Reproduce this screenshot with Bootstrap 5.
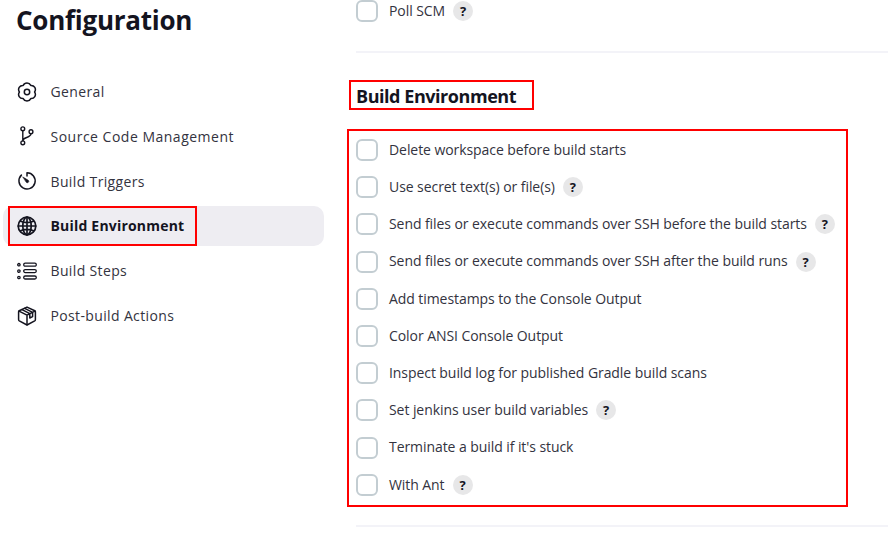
<!DOCTYPE html>
<html lang="en">
<head>
<meta charset="utf-8">
<meta name="viewport" content="width=device-width, initial-scale=1">
<title>Configuration</title>
<link href="https://cdn.jsdelivr.net/npm/bootstrap@5.3.0/dist/css/bootstrap.min.css" rel="stylesheet">
<style>
body{font-family:"Open Sans","Noto Sans",sans-serif;color:#14141f;background:#fff;height:550px;overflow:hidden}
.side{width:324px;padding:2px 0 0 3px}
.page-title{font-size:26px;line-height:36px;font-weight:700;letter-spacing:-.26px;margin:0 0 33.6px 13px}
.task-list{gap:4.8px}
.task{height:40px;padding:0 0 0 14px;gap:13.5px;border-radius:10px;color:#333340;font-size:14px;letter-spacing:.36px;text-decoration:none;white-space:nowrap}
.task svg{width:20px;height:20px;fill:none;stroke:#14141f;stroke-linecap:round;stroke-linejoin:round;flex:none}
.task.wide-text{letter-spacing:.5px}
.task.current{background:#eeedf2;color:#14141f;font-weight:700;letter-spacing:.2px}
.mark-current{left:5px;top:0;width:189px;height:40px;border:2px solid #f00}
.main{margin-left:23px;min-width:0}
.opt{height:22px;gap:11px;font-size:14px;letter-spacing:-.07px;color:#333340;white-space:nowrap}
.opt label{padding-bottom:1.4px}
.opt.first{margin-left:9px;margin-bottom:29px}
.opt .form-check-input{width:22px;height:22px;margin:0;border:2px solid #c3cdd2;border-radius:6px;flex:none}
.help{width:20px;height:20px;border-radius:50%;background:#e7e7e8;color:#14141f;font-weight:700;font-size:13px;line-height:20px;text-align:center;margin-left:-3px;letter-spacing:0}
.rule{height:2px;background:#f3f3f8;margin-left:9px}
.heading-frame{width:185px;height:30px;border:2px solid #f00;margin:27px 0 19px 2px;padding-left:5px;font-size:18px;font-weight:700;letter-spacing:-.45px;line-height:28px;white-space:nowrap}
.options-frame{width:501px;height:378px;border:2px solid #f00;padding:8px 0 0 7px;gap:15.2px;margin-bottom:18px}
</style>
</head>
<body>
<div class="d-flex">
<aside class="side flex-shrink-0">
<h1 class="page-title">Configuration</h1>
<nav class="task-list d-flex flex-column">
<a class="task d-flex align-items-center" href="#"><svg viewBox="0 0 20 20"><g stroke-width="1.5"><path d="M6.2 3.4A4.2 4.2 0 0 1 13.8 3.4A4.2 4.2 0 0 1 17.6 10A4.2 4.2 0 0 1 13.8 16.6A4.2 4.2 0 0 1 6.2 16.6A4.2 4.2 0 0 1 2.4 10A4.2 4.2 0 0 1 6.2 3.4Z"/><circle cx="10" cy="10" r="2.7"/></g></svg>General</a>
<a class="task wide-text d-flex align-items-center" href="#"><svg viewBox="0 0 20 20"><g stroke-width="1.4"><circle cx="5.8" cy="2.8" r="1.9"/><circle cx="5.8" cy="16.8" r="1.9"/><circle cx="14" cy="5.7" r="1.9"/><path d="M5.8 4.7V14.9M14 7.6C14 12.3 5.8 10.7 5.8 14.9"/></g></svg>Source Code Management</a>
<a class="task d-flex align-items-center" href="#"><svg viewBox="0 0 20 20"><path stroke-width="1.5" d="M4.4 4.1A8.1 8.1 0 1 0 10 1.8V5"/><path d="M6 6.1L11.3 9.3A1.4 1.4 0 0 1 9.3 11.3Z" fill="#14141f" stroke-width=".6"/></svg>Build Triggers</a>
<a class="task current d-flex align-items-center position-relative" href="#"><svg viewBox="0 0 20 20"><g stroke-width="1.7"><circle cx="10" cy="10" r="8.8"/><ellipse cx="10" cy="10" rx="4.2" ry="8.8"/><path d="M10 1.3V18.7M1.3 10H18.7M3.6 5.2Q10 8 16.4 5.2M3.6 14.8Q10 12 16.4 14.8"/></g></svg>Build Environment<span class="mark-current position-absolute"></span></a>
<a class="task d-flex align-items-center" href="#"><svg viewBox="0 0 20 20"><g stroke-width="1.3"><rect x="6.7" y="2.2" width="12.6" height="3" rx="1.5"/><rect x="6.7" y="8.6" width="12.6" height="3" rx="1.5"/><rect x="6.7" y="15" width="12.6" height="3" rx="1.5"/><circle cx="1.9" cy="3.7" r="1.2"/><circle cx="1.9" cy="10.1" r="1.2"/><circle cx="1.9" cy="16.5" r="1.2"/></g></svg>Build Steps</a>
<a class="task d-flex align-items-center" href="#"><svg viewBox="0 0 20 20"><g stroke-width="1.5"><path d="M10 1.1L17.8 4.7Q18.4 5 18.4 5.8V13.6Q18.4 14.5 17.7 14.9L10 19L2.3 14.9Q1.6 14.5 1.6 13.6V5.8Q1.6 5 2.2 4.7Z"/><path d="M2 5.2L10 9.2L18 5.2M10 9.2V18.8M5 3.6L12.8 7.6V12L15.6 10.6V6.3L7.7 2.3"/></g></svg>Post-build Actions</a>
</nav>
</aside>
<main class="main flex-grow-1">
<div class="opt first d-flex align-items-center"><input class="form-check-input" type="checkbox" id="o0"><label for="o0">Poll SCM</label><span class="help">?</span></div>
<div class="rule"></div>
<h2 class="heading-frame">Build Environment</h2>
<section class="options-frame d-flex flex-column">
<div class="opt d-flex align-items-center"><input class="form-check-input" type="checkbox" id="o1"><label for="o1">Delete workspace before build starts</label></div>
<div class="opt d-flex align-items-center"><input class="form-check-input" type="checkbox" id="o2"><label for="o2">Use secret text(s) or file(s)</label><span class="help">?</span></div>
<div class="opt d-flex align-items-center"><input class="form-check-input" type="checkbox" id="o3"><label for="o3">Send files or execute commands over SSH before the build starts</label><span class="help">?</span></div>
<div class="opt d-flex align-items-center"><input class="form-check-input" type="checkbox" id="o4"><label for="o4">Send files or execute commands over SSH after the build runs</label><span class="help">?</span></div>
<div class="opt d-flex align-items-center"><input class="form-check-input" type="checkbox" id="o5"><label for="o5">Add timestamps to the Console Output</label></div>
<div class="opt d-flex align-items-center"><input class="form-check-input" type="checkbox" id="o6"><label for="o6">Color ANSI Console Output</label></div>
<div class="opt d-flex align-items-center"><input class="form-check-input" type="checkbox" id="o7"><label for="o7">Inspect build log for published Gradle build scans</label></div>
<div class="opt d-flex align-items-center"><input class="form-check-input" type="checkbox" id="o8"><label for="o8">Set jenkins user build variables</label><span class="help">?</span></div>
<div class="opt d-flex align-items-center"><input class="form-check-input" type="checkbox" id="o9"><label for="o9">Terminate a build if it's stuck</label></div>
<div class="opt d-flex align-items-center"><input class="form-check-input" type="checkbox" id="o10"><label for="o10">With Ant</label><span class="help">?</span></div>
</section>
<div class="rule"></div>
</main>
</div>
<script src="https://cdn.jsdelivr.net/npm/bootstrap@5.3.0/dist/js/bootstrap.bundle.min.js"></script>
</body>
</html>
